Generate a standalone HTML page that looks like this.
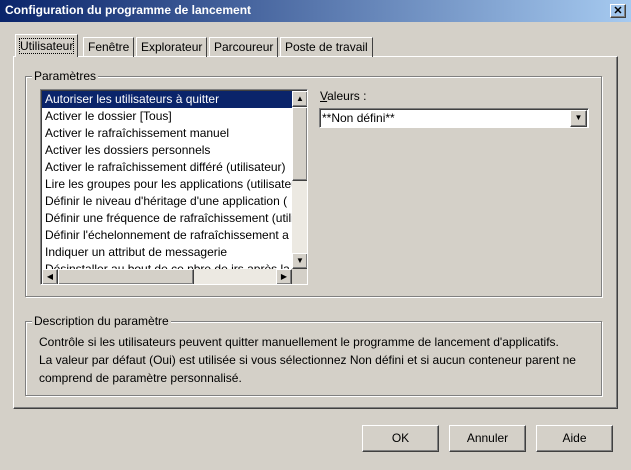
<html><head><style>
body{margin:0;width:631px;height:470px;background:#d4d0c8;font-family:"Liberation Sans",sans-serif;font-size:12px;position:relative;overflow:hidden}
.a{position:absolute}
.out{border:1px solid;border-color:#fff #404040 #404040 #fff;box-shadow:inset -1px -1px #808080}
.in{border:1px solid;border-color:#808080 #fff #fff #808080;box-shadow:inset 1px 1px #404040}
.grp{border:1px solid #808080;box-shadow:1px 1px #fff, inset 1px 1px #fff}
.lg{background:#d4d0c8;padding:0 2px;position:absolute;top:-8px;left:6px}
.btn{text-align:center;line-height:24px}
.row{height:17px;line-height:17px;padding-left:3px;white-space:nowrap}
.tab{top:37px;height:19px;line-height:18px;padding:0 4px;border:1px solid;border-color:#fff #404040 transparent #fff;border-bottom:none}
.sb{width:14px;height:14px;background:#d4d0c8;font-size:8px;text-align:center;line-height:14px}
</style></head><body>
<div class="a" style="left:0;top:0;width:631px;height:22px;background:linear-gradient(90deg,#0a246a,#a6caf0)"></div>
<div class="a" style="left:5px;top:3px;color:#fff;font-weight:bold;font-size:12px">Configuration du programme de lancement</div>
<div class="a out" style="left:610px;top:4px;width:14px;height:12px;text-align:center;line-height:12px;font-size:11px;font-weight:bold">✕</div>

<div class="a out" style="left:13px;top:56px;width:603px;height:351px"></div>
<div class="a tab" style="left:15px;top:34px;height:22px;line-height:22px;background:#d4d0c8;z-index:2"><span style="outline:1px dotted #000">Utilisateur</span></div>
<div class="a tab" style="left:83px">Fenêtre</div>
<div class="a tab" style="left:136px">Explorateur</div>
<div class="a tab" style="left:209px">Parcoureur</div>
<div class="a tab" style="left:280px">Poste de travail</div>

<div class="a grp" style="left:25px;top:76px;width:575px;height:219px"><span class="lg">Paramètres</span></div>
<div class="a in" style="left:40px;top:89px;width:266px;height:194px;background:#fff;overflow:hidden">
<div style="position:absolute;left:1px;top:1px;width:250px;height:178px;overflow:hidden">
<div class="row" style="background:#0a246a;color:#fff">Autoriser les utilisateurs à quitter</div>
<div class="row">Activer le dossier [Tous]</div>
<div class="row">Activer le rafraîchissement manuel</div>
<div class="row">Activer les dossiers personnels</div>
<div class="row">Activer le rafraîchissement différé (utilisateur)</div>
<div class="row">Lire les groupes pour les applications (utilisateur)</div>
<div class="row">Définir le niveau d'héritage d'une application (</div>
<div class="row">Définir une fréquence de rafraîchissement (utilisateur)</div>
<div class="row">Définir l'échelonnement de rafraîchissement a</div>
<div class="row">Indiquer un attribut de messagerie</div>
<div class="row">Désinstaller au bout de ce nbre de jrs après la</div>
</div>
<div class="a" style="left:251px;top:1px;width:16px;height:178px;background:#ece9e2"></div>
<div class="a sb out" style="left:251px;top:1px">▲</div>
<div class="a out" style="left:251px;top:17px;width:14px;height:72px;background:#d4d0c8"></div>
<div class="a sb out" style="left:251px;top:163px">▼</div>
<div class="a" style="left:1px;top:179px;width:250px;height:16px;background:#ece9e2"></div>
<div class="a sb out" style="left:1px;top:179px">◀</div>
<div class="a out" style="left:17px;top:179px;width:134px;height:14px;background:#d4d0c8"></div>
<div class="a sb out" style="left:235px;top:179px">▶</div>
<div class="a" style="left:251px;top:179px;width:16px;height:16px;background:#d4d0c8"></div>
</div>

<div class="a" style="left:320px;top:89px"><u>V</u>aleurs :</div>
<div class="a in" style="left:319px;top:108px;width:268px;height:18px;background:#fff"><span style="position:absolute;left:2px;top:2px">**Non défini**</span>
<div class="a sb out" style="right:1px;top:1px;width:15px;height:15px">▼</div></div>

<div class="a grp" style="left:25px;top:321px;width:575px;height:73px"><span class="lg">Description du paramètre</span></div>
<div class="a" style="left:39px;top:333px;line-height:18px;width:560px">Contrôle si les utilisateurs peuvent quitter manuellement le programme de lancement d'applicatifs.<br>La valeur par défaut (Oui) est utilisée si vous sélectionnez Non défini et si aucun conteneur parent ne<br>comprend de paramètre personnalisé.</div>

<div class="a out btn" style="left:362px;top:425px;width:75px;height:25px">OK</div>
<div class="a out btn" style="left:449px;top:425px;width:75px;height:25px">Annuler</div>
<div class="a out btn" style="left:536px;top:425px;width:75px;height:25px">Aide</div>
</body></html>
